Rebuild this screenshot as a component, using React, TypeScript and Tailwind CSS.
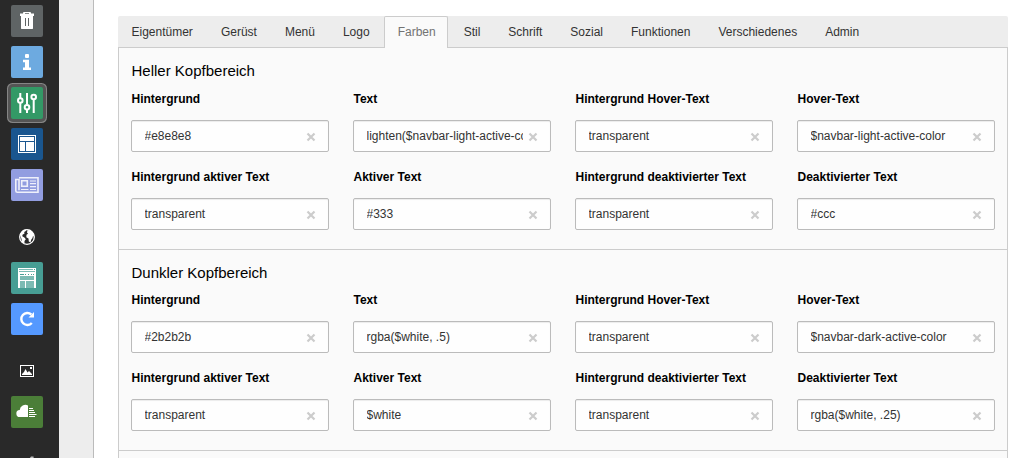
import type { ReactNode } from 'react';
import { clsx } from 'clsx';

interface Module {
  name: string;
  color: string;
  icon: ReactNode;
  active?: boolean;
}

interface Field {
  label: string;
  value: string;
}

interface Section {
  title: string;
  fields: Field[];
}

const tabs = [
  'Eigentümer',
  'Gerüst',
  'Menü',
  'Logo',
  'Farben',
  'Stil',
  'Schrift',
  'Sozial',
  'Funktionen',
  'Verschiedenes',
  'Admin',
];

const sections: Section[] = [
  {
    title: 'Heller Kopfbereich',
    fields: [
      { label: 'Hintergrund', value: '#e8e8e8' },
      { label: 'Text', value: 'lighten($navbar-light-active-color, 10%)' },
      { label: 'Hintergrund Hover-Text', value: 'transparent' },
      { label: 'Hover-Text', value: '$navbar-light-active-color' },
      { label: 'Hintergrund aktiver Text', value: 'transparent' },
      { label: 'Aktiver Text', value: '#333' },
      { label: 'Hintergrund deaktivierter Text', value: 'transparent' },
      { label: 'Deaktivierter Text', value: '#ccc' },
    ],
  },
  {
    title: 'Dunkler Kopfbereich',
    fields: [
      { label: 'Hintergrund', value: '#2b2b2b' },
      { label: 'Text', value: 'rgba($white, .5)' },
      { label: 'Hintergrund Hover-Text', value: 'transparent' },
      { label: 'Hover-Text', value: '$navbar-dark-active-color' },
      { label: 'Hintergrund aktiver Text', value: 'transparent' },
      { label: 'Aktiver Text', value: '$white' },
      { label: 'Hintergrund deaktivierter Text', value: 'transparent' },
      { label: 'Deaktivierter Text', value: 'rgba($white, .25)' },
    ],
  },
];

function Icon({ children }: { children: ReactNode }) {
  return (
    <svg viewBox="0 0 32 32" className="size-8" fill="#fff">
      {children}
    </svg>
  );
}

const moduleGroups: Module[][] = [
  [
    {
      name: 'recycler',
      color: 'bg-[#5f6465]',
      icon: (
        <Icon>
          <path fillRule="evenodd" d="M12 8.500V7.500L13 7h6l1 .500v1h3V11h-1v12.500l-.500.500h-11l-.500-.500V11H9V8.500zM14 13v8h1v-8zM17 13v8h1v-8zM14 8v.700h4V8z" />
        </Icon>
      ),
    },
    {
      name: 'info',
      color: 'bg-[#6daae0]',
      icon: (
        <Icon>
          <rect x="14" y="8" width="4" height="4" rx="1" />
          <path d="M12 13.700h6v7.800h2V24h-8v-2.500h2V16.200h-2z" />
        </Icon>
      ),
    },
    {
      name: 'template',
      color: 'bg-[#339966]',
      active: true,
      icon: (
        <Icon>
          <g fill="none" stroke="#fff" strokeWidth="2">
            <path d="M9.300 6v5M9.300 16v10M16 6v11.500M16 23v3M22.700 12.500V26" />
            <circle cx="9.300" cy="13.500" r="2.300" />
            <circle cx="16" cy="20.300" r="2.300" />
            <circle cx="22.700" cy="10" r="2.300" />
          </g>
        </Icon>
      ),
    },
    {
      name: 'layout',
      color: 'bg-[#1a568f]',
      icon: (
        <Icon>
          <path fillRule="evenodd" d="M7 7h18v18H7zM8 8v16h16V8z" />
          <path d="M9 9h14v4H9zM9 14h5v9H9zM15 14h8v9h-8z" />
        </Icon>
      ),
    },
    {
      name: 'news',
      color: 'bg-[#929de0]',
      icon: (
        <Icon>
          <g fill="none" stroke="#fff" strokeOpacity=".85" strokeWidth="1.600">
            <path d="M8 8.800h19v14.400H6.300A1.500 1.500 0 0 1 4.800 21.700V10.500H8v10.700" />
            <path d="M10.700 11.800h5.600v5.400h-5.600z" />
            <path d="M10 20.500h7.500M19 12h6M19 14.700h6M19 17.600h6M19 20.500h6" strokeWidth="1.200" />
          </g>
        </Icon>
      ),
    },
  ],
  [
    {
      name: 'site',
      color: 'bg-transparent',
      icon: (
        <Icon>
          <circle cx="16" cy="16" r="7.300" fill="none" stroke="#fff" strokeWidth="1.300" />
          <path d="M9 13.500L11.500 9.500 15.500 8.300 14.500 10.300 13.200 11 13.500 12.500 11.500 13.700 11.300 15.300 13.700 16.800 14.800 18.300 13.500 20 13.500 22.500 10.800 21.300 10.500 18z" />
          <path d="M16.500 9.300L19 9 22.500 12.500 23.300 15.500 22 15 21.500 17 20.200 18.700 19.500 21.500 17.800 20.500 17.500 17.500 15.300 16.300 15.500 13.800 17 12.700 16 11.500z" />
        </Icon>
      ),
    },
    {
      name: 'styleguide',
      color: 'bg-[#479e94]',
      icon: (
        <Icon>
          <path d="M7 6h18v20H7z" />
          <path d="M8 7h14v1H8zM8 9h16v1H8z" fill="#7cbbb4" />
          <path d="M23 7h1v1h-1zM9 12h4v1H9zM14 12h1v1h-1zM17 12h1v1h-1zM20 12h1v1h-1zM22 12h1v1h-1z" fill="#479e94" />
          <path d="M9 14h14v4H9zM9 19h5v7H9zM15 19h8v7h-8z" fill="#7cbbb4" />
        </Icon>
      ),
    },
    {
      name: 'upgrade',
      color: 'bg-[#5599ff]',
      icon: (
        <Icon>
          <path
            d="M20.300 11.500A6 6 0 1 0 20.800 20"
            fill="none"
            stroke="#fff"
            strokeWidth="2.400"
          />
          <path d="M23 9v5.500h-5.500z" />
        </Icon>
      ),
    },
  ],
  [
    {
      name: 'filelist',
      color: 'bg-transparent',
      icon: (
        <Icon>
          <path fillRule="evenodd" d="M9 10h14v12H9zM10 11v10h12V11z" />
          <path d="M11 20v-1l2-2 1.500-3 2 3.500 1.500-1.500 3 3v1z" />
          <path d="M19 12h2v2h-2z" />
        </Icon>
      ),
    },
    {
      name: 'cloud',
      color: 'bg-[#4b7e38]',
      icon: (
        <Icon>
          <path d="M17 9.500V21H9a3.500 3.500 0 0 1-.300-7A5.800 5.800 0 0 1 17 9.500z" />
          <path d="M18 12h4v1h-4zM18 14h5v1h-5zM18 16h6v1h-6zM18 18h7.500v1H18zM18 20h6v1h-6z" />
        </Icon>
      ),
    },
  ],
  [
    {
      name: 'extension',
      color: 'bg-transparent',
      icon: (
        <Icon>
          <path d="M18.500 10.500l1.500-2h2.500l.500 5z" fill="#bbb" />
        </Icon>
      ),
    },
  ],
];

function ModuleButton({ module }: { module: Module }) {
  return (
    <button
      type="button"
      aria-label={module.name}
      className={clsx(
        'flex size-8 shrink-0 items-center justify-center rounded-[2px]',
        module.color,
        module.active && 'shadow-[0_0_0_3px_#555,0_0_0_4px_#858585]'
      )}
    >
      {module.icon}
    </button>
  );
}

function ColorField({ field }: { field: Field }) {
  return (
    <div>
      <div className="pl-[0.5px] text-xs leading-[18px] font-bold whitespace-nowrap text-black">
        {field.label}
      </div>
      <div className="mt-3 flex h-8 items-center rounded-[2px] border border-[#bbb] bg-[#fefefe] pr-3 pl-[12.5px] shadow-[inset_0_1px_1px_rgba(0,0,0,0.075)]">
        <div className="w-[156.5px] shrink-0 overflow-hidden text-xs leading-[18px] whitespace-nowrap text-[#333]">
          {field.value}
        </div>
        <svg viewBox="0 0 10 10" className="mt-0.5 ml-[5px] size-2.5 shrink-0">
          <path d="M1.500 1.500l7 7M8.500 1.500l-7 7" stroke="#ccc" strokeWidth="2.200" />
        </svg>
      </div>
    </div>
  );
}

export default function App() {
  return (
    <div className="flex h-[458px] overflow-hidden bg-white font-['Liberation_Sans',Arial,sans-serif]">
      <nav className="flex w-[59px] shrink-0 flex-col items-center gap-5 bg-[#292929] pt-[5px] pr-[5px]">
        {moduleGroups.map((group, index) => (
          <div key={index} className="flex flex-col gap-[9px]">
            {group.map((module) => (
              <ModuleButton key={module.name} module={module} />
            ))}
          </div>
        ))}
      </nav>
      <aside className="w-[35px] shrink-0 border-r border-[#bbb] bg-[#ededed]" />

      <main className="flex-1 pt-4 pr-3 pl-6">
        <div className="flex h-8 rounded-t-[2px] border-b border-[#ccc] bg-[#ededed]">
          {tabs.map((tab) => (
            <button
              key={tab}
              type="button"
              className={clsx(
                'mr-[2px] h-8 rounded-t-[2px] border border-b-0 pr-[11.5px] pb-0.5 pl-[12.5px] text-xs whitespace-nowrap',
                tab === 'Farben'
                  ? 'border-[#ccc] bg-[#fafafa] text-[#737373]'
                  : 'border-transparent text-[#333]'
              )}
            >
              {tab}
            </button>
          ))}
        </div>

        <div className="border-x border-[#ccc] bg-[#fafafa]">
          {sections.map((section, index) => (
            <section key={section.title} className="border-b border-[#ccc] px-3 pt-3 pb-[19px]">
              <h4
                className={clsx(
                  'pl-[0.5px] text-[15px] leading-[22px] text-black',
                  index === 0 ? 'mb-2' : 'mb-[7px]'
                )}
              >
                {section.title}
              </h4>
              <div className="grid grid-cols-4 gap-x-6 gap-y-4">
                {section.fields.map((field) => (
                  <ColorField key={field.label} field={field} />
                ))}
              </div>
            </section>
          ))}
          <div className="h-8" />
        </div>
      </main>
    </div>
  );
}
